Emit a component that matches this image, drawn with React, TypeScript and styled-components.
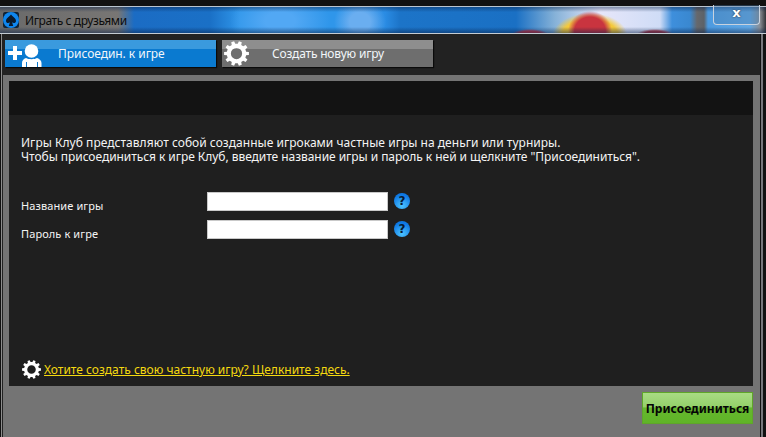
import React from "react";
import styled, { createGlobalStyle } from "styled-components";

const Global = createGlobalStyle`
  html, body { margin: 0; padding: 0; background: #111; }
  * { box-sizing: border-box; }
  body { font-family: "Noto Sans", "Liberation Sans", sans-serif; }
`;

const Screen = styled.div`
  width: 766px;
  height: 437px;
  overflow: hidden;
  display: flex;
  flex-direction: column;
  background: #111;
  padding-top: 6px;
`;

const TitleBar = styled.div`
  height: 28px;
  flex: none;
  display: flex;
  align-items: center;
  padding: 0 6px 0 3px;
  gap: 6px;
  border-top: 1px solid #b9c4cf;
  border-bottom: 1px solid #c4ccd3;
  background:
    linear-gradient(rgba(6, 30, 70, 0.45) 0, rgba(6, 30, 70, 0) 5px, rgba(6, 30, 70, 0) 20px, rgba(6, 30, 70, 0.5) 26px),
    radial-gradient(ellipse 22px 20px at 590px 24px, #c9343f 0 70%, rgba(201, 52, 63, 0) 100%),
    radial-gradient(ellipse 38px 24px at 590px 30px, #f4c93a 0 75%, rgba(244, 201, 58, 0) 100%),
    radial-gradient(ellipse 18px 5px at 530px 27px, #c43a4c 0 60%, rgba(196, 58, 76, 0) 100%),
    radial-gradient(ellipse 18px 5px at 655px 27px, #b33a48 0 60%, rgba(179, 58, 72, 0) 100%),
    radial-gradient(ellipse 26px 24px at 360px 15px, #6aaef0 0 40%, rgba(106, 174, 240, 0) 100%),
    radial-gradient(ellipse 50px 30px at 280px 14px, #52a8f4 0 30%, rgba(82, 168, 244, 0) 100%),
    linear-gradient(
      90deg,
      #6a6a6a 0,
      #787674 118px,
      #1b6cc4 134px,
      #1a70c6 210px,
      #2f96ea 240px,
      #2f96ea 340px,
      #2a8ce4 385px,
      #1c74c8 400px,
      #1a70c4 516px,
      #86b2d8 555px,
      #e6e6fa 600px,
      #cfdcf6 660px,
      #3e8fdc 672px,
      #3a88d0 690px,
      #66686c 697px,
      #5c6268 704px,
      #4c9ae0 708px,
      #62a8e4 750px,
      #8a8e94 760px,
      #303236 766px
    );
`;

const AppLogo = styled.svg`
  width: 16px;
  height: 16px;
  flex: none;
`;

const WindowTitle = styled.span`
  font-size: 12px;
  color: #0c0c0c;
  letter-spacing: -0.4px;
`;

const CloseButton = styled.div`
  position: absolute;
  left: 713px;
  top: 5px;
  width: 47px;
  height: 20px;
  border: 1px solid #c8d2de;
  border-top: none;
  border-radius: 0 0 4px 4px;
  background: rgba(70, 120, 170, 0.35);
  color: #fff;
  font: bold 13px/16px "DejaVu Sans", sans-serif;
  text-align: center;
  text-shadow: 0 0 2px #222;
`;

const Body = styled.div`
  flex: 1;
  min-height: 0;
  display: flex;
  flex-direction: column;
  margin-left: 1px;
  margin-right: 5px;
  background: #222;
  border-left: 1px solid #8d8d8d;
  border-right: 1px solid #111;
  box-shadow: 2px 0 0 #77777c;
`;

const TabRow = styled.div`
  display: flex;
  gap: 6px;
  padding: 6px 0 8px 3px;
  flex: none;
`;

const Tab = styled.div<{ $active?: boolean; $width: number }>`
  width: ${(p) => p.$width}px;
  height: 27px;
  display: flex;
  align-items: center;
  color: #f2f6fa;
  font-size: 12px;
  box-shadow: 1px 1px 1px #0a0a0a;
  background: ${(p) =>
    p.$active
      ? "linear-gradient(#3a9ade 0 9px, #0a7ad0 9px)"
      : "linear-gradient(#8e8e8e 0 9px, #6e6e6e 9px)"};
`;

const TabIcon = styled.span`
  width: 50px;
  height: 27px;
  flex: none;
  display: flex;
  align-items: center;
  padding-left: 2px;
`;

const TabLabel = styled.span<{ $shift: number; $spacing: number }>`
  padding-left: ${(p) => p.$shift}px;
  white-space: nowrap;
  letter-spacing: ${(p) => p.$spacing}px;
`;

const Panel = styled.div`
  flex: 1;
  min-height: 0;
  display: flex;
  flex-direction: column;
  background: #747474;
  padding: 6px 0 0 6px;
  margin-left: 1px;
`;

const Inner = styled.div`
  width: 744px;
  height: 305px;
  flex: none;
  display: flex;
  flex-direction: column;
  background: #1f1f1f;
`;

const InnerHeader = styled.div`
  height: 34px;
  flex: none;
  background: #131313;
`;

const Content = styled.div`
  flex: 1;
  display: flex;
  flex-direction: column;
  padding: 21px 0 7px 12px;
  color: #f4f4f4;
  font-size: 12px;
`;

const Intro = styled.div`
  display: flex;
  flex-direction: column;
`;

const IntroLine = styled.p<{ $spacing: number }>`
  margin: 0;
  height: 14px;
  line-height: 14px;
  white-space: nowrap;
  letter-spacing: ${(p) => p.$spacing}px;
`;

const Form = styled.div`
  display: grid;
  grid-template-columns: 186px 181px 24px;
  grid-auto-rows: 19px;
  row-gap: 9px;
  margin-top: 28px;
  align-items: center;
`;

const FieldLabel = styled.label`
  font-size: 11px;
  line-height: 14px;
  position: relative;
  top: 4px;
  letter-spacing: 0.1px;
`;

const Input = styled.div`
  height: 19px;
  background: #fff;
  border: 1px solid #c9c9c9;
`;

const Help = styled.span`
  margin: 0 0 2px 6px;
  width: 16px;
  height: 16px;
  border-radius: 50%;
  background: radial-gradient(circle at 50% 80%, #4cc4ff, #0e78e4 72%);
  color: #071a33;
  font: bold 12px/16px "DejaVu Sans", sans-serif;
  text-align: center;
`;

const LinkRow = styled.div`
  margin-top: auto;
  display: flex;
  align-items: center;
  gap: 3px;
  margin-left: 1px;
`;

const LinkText = styled.a`
  color: #f5d90f;
  text-decoration: underline;
  white-space: nowrap;
  letter-spacing: 0px;
`;

const Footer = styled.div`
  flex: 1;
  display: flex;
  justify-content: flex-end;
  align-items: flex-start;
  padding: 6px 7px 0 0;
`;

const JoinButton = styled.button`
  width: 111px;
  height: 32px;
  padding: 0;
  border: 1px solid #5fa62a;
  background: linear-gradient(#a9dc84 0, #94d06a 46%, #66b82e 50%, #5fb428 100%);
  color: #050505;
  font: bold 12px "Noto Sans", sans-serif;
`;

function gearPath(teeth: number, rOuter: number, rInner: number) {
  const pts: string[] = [];
  const step = (Math.PI * 2) / teeth;
  for (let i = 0; i < teeth; i++) {
    const a = i * step;
    const w = step * 0.24;
    const add = (ang: number, r: number) =>
      pts.push(`${(12 + r * Math.cos(ang)).toFixed(2)} ${(12 + r * Math.sin(ang)).toFixed(2)}`);
    add(a - w * 1.25, rInner);
    add(a - w * 0.8, rOuter);
    add(a + w * 0.8, rOuter);
    add(a + w * 1.25, rInner);
  }
  return `M${pts.join("L")}Z`;
}

const Gear = ({ size }: { size: number }) => (
  <svg width={size} height={size} viewBox="0 0 24 24">
    <path
      fillRule="evenodd"
      fill="#fff"
      d={`${gearPath(10, 12, 9.4)} M12 6.6a5.4 5.4 0 1 0 0 10.8a5.4 5.4 0 1 0 0-10.8Z`}
    />
  </svg>
);

const JoinIcon = () => (
  <svg width="38" height="27" viewBox="0 0 38 27">
    <path fill="#fff" d="M1 11h5V6h4v5h5v4h-5v5H6v-5H1z" />
    <circle cx="24.500" cy="11" r="6.800" fill="#fff" />
    <path
      fill="#fff"
      d="M15 27v-4c0-2.500 1.500-4 4-5 2.500 1.600 8.500 1.600 11 0 2.500 1 4.500 2.500 4.500 5v4H31v-5h-1v5H20v-5h-1v5z"
    />
  </svg>
);

export default function App() {
  return (
    <Screen>
      <Global />
      <TitleBar>
        <AppLogo viewBox="0 0 16 16">
          <rect width="16" height="16" rx="2" fill="#123" />
          <circle cx="8" cy="8" r="8" fill="#0f86ee" />
          <path
            fill="#0a1a2c"
            d="M8 2.500c1.500 2.200 5 3.500 5 6.500 0 1.900-2.300 2.800-3.900 1.300L10.200 14H5.800l1.100-3.700C5.300 11.800 3 10.900 3 9c0-3 3.500-4.300 5-6.500z"
          />
        </AppLogo>
        <WindowTitle>Играть с друзьями</WindowTitle>
        <CloseButton>x</CloseButton>
      </TitleBar>
      <Body>
        <TabRow>
          <Tab $active $width={211}>
            <TabIcon>
              <JoinIcon />
            </TabIcon>
            <TabLabel $shift={3} $spacing={-0.05}>
              Присоедин. к игре
            </TabLabel>
          </Tab>
          <Tab $width={211}>
            <TabIcon>
              <Gear size={25} />
            </TabIcon>
            <TabLabel $shift={0} $spacing={-0.2}>
              Создать новую игру
            </TabLabel>
          </Tab>
        </TabRow>
        <Panel>
          <Inner>
            <InnerHeader />
            <Content>
              <Intro>
                <IntroLine $spacing={0.03}>
                  Игры Клуб представляют собой созданные игроками частные игры на деньги или турниры.
                </IntroLine>
                <IntroLine $spacing={-0.05}>
                  Чтобы присоединиться к игре Клуб, введите название игры и пароль к ней и щелкните
                  "Присоединиться".
                </IntroLine>
              </Intro>
              <Form>
                <FieldLabel>Название игры</FieldLabel>
                <Input />
                <Help>?</Help>
                <FieldLabel>Пароль к игре</FieldLabel>
                <Input />
                <Help>?</Help>
              </Form>
              <LinkRow>
                <Gear size={19} />
                <LinkText href="#">Хотите создать свою частную игру? Щелкните здесь.</LinkText>
              </LinkRow>
            </Content>
          </Inner>
          <Footer>
            <JoinButton>Присоединиться</JoinButton>
          </Footer>
        </Panel>
      </Body>
    </Screen>
  );
}
